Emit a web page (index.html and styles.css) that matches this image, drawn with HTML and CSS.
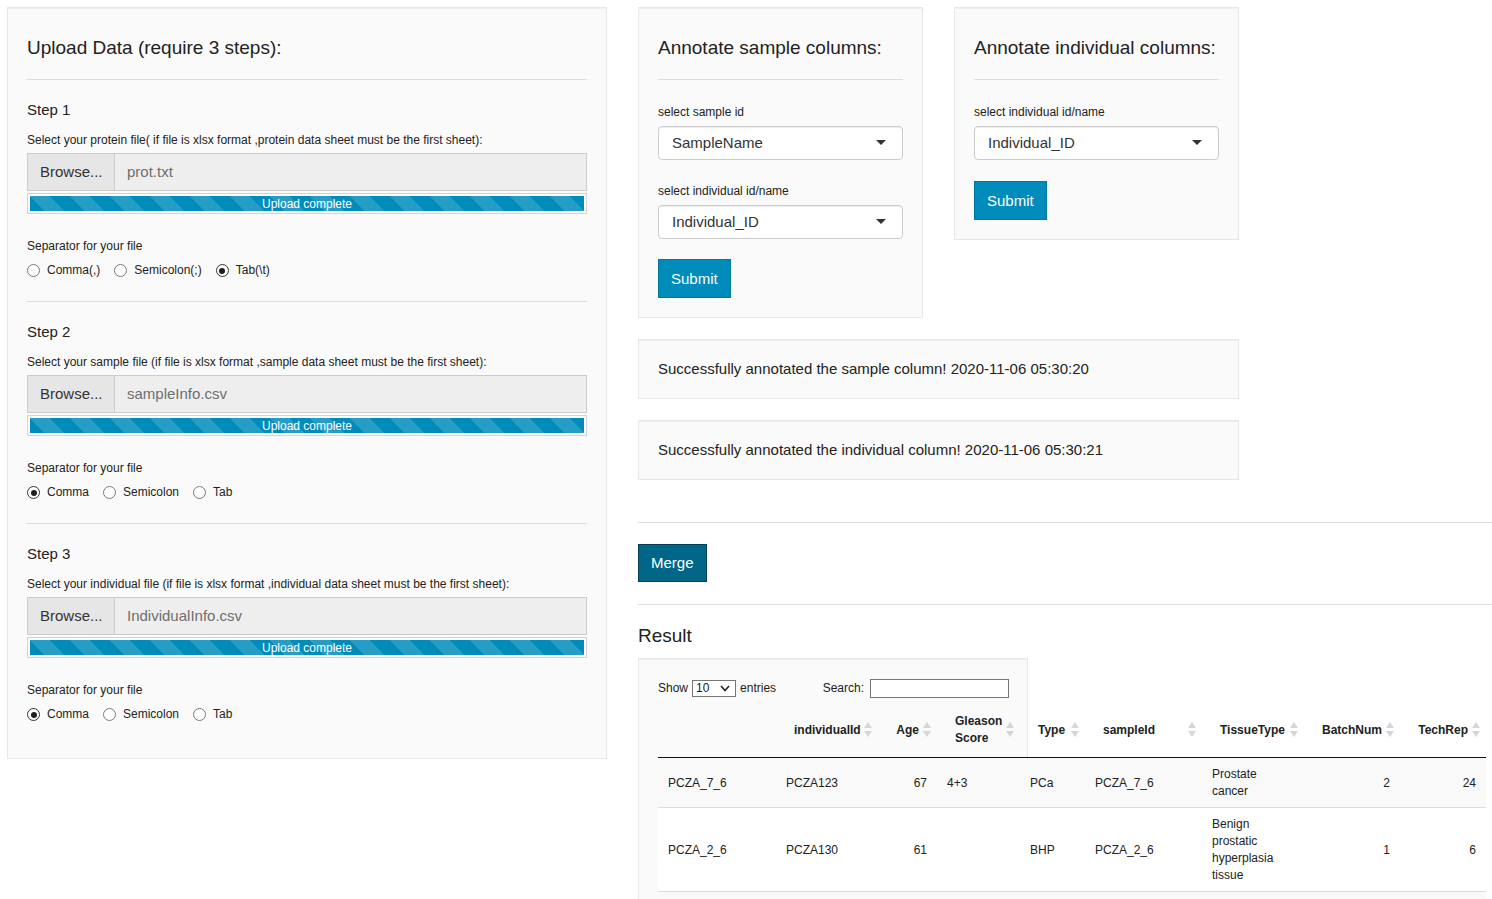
FILE: index.html
```html
<!DOCTYPE html>
<html lang="en">
<head>
<meta charset="utf-8">
<title>Upload Data</title>
<link rel="stylesheet" href="styles.css">
</head>
<body>
<div class="page">
  <aside class="sidebar well">
    <h3 class="well-title">Upload Data (require 3 steps):</h3>
    <hr class="rule">
    <section class="step">
      <h4 class="step-title">Step 1</h4>
      <div class="field-label">Select your protein file( if file is xlsx format ,protein data sheet must be the first sheet):</div>
      <div class="file-input"><span class="browse">Browse...</span><span class="file-name">prot.txt</span></div>
      <div class="progress"><div class="progress-bar">Upload complete</div></div>
      <div class="field-label sep-label">Separator for your file</div>
      <div class="radios">
        <span class="radio"><span class="radio-dot"></span>Comma(,)</span>
        <span class="radio"><span class="radio-dot"></span>Semicolon(;)</span>
        <span class="radio"><span class="radio-dot on"><span class="dot"></span></span>Tab(\t)</span>
      </div>
    </section>
    <hr class="rule">
    <section class="step">
      <h4 class="step-title">Step 2</h4>
      <div class="field-label">Select your sample file (if file is xlsx format ,sample data sheet must be the first sheet):</div>
      <div class="file-input"><span class="browse">Browse...</span><span class="file-name">sampleInfo.csv</span></div>
      <div class="progress"><div class="progress-bar">Upload complete</div></div>
      <div class="field-label sep-label">Separator for your file</div>
      <div class="radios">
        <span class="radio"><span class="radio-dot on"><span class="dot"></span></span>Comma</span>
        <span class="radio"><span class="radio-dot"></span>Semicolon</span>
        <span class="radio"><span class="radio-dot"></span>Tab</span>
      </div>
    </section>
    <hr class="rule">
    <section class="step last">
      <h4 class="step-title">Step 3</h4>
      <div class="field-label">Select your individual file (if file is xlsx format ,individual data sheet must be the first sheet):</div>
      <div class="file-input"><span class="browse">Browse...</span><span class="file-name">IndividualInfo.csv</span></div>
      <div class="progress"><div class="progress-bar">Upload complete</div></div>
      <div class="field-label sep-label">Separator for your file</div>
      <div class="radios">
        <span class="radio"><span class="radio-dot on"><span class="dot"></span></span>Comma</span>
        <span class="radio"><span class="radio-dot"></span>Semicolon</span>
        <span class="radio"><span class="radio-dot"></span>Tab</span>
      </div>
    </section>
  </aside>

  <main class="main">
    <div class="annot-row">
      <div class="well annot">
        <h3 class="well-title">Annotate sample columns:</h3>
        <hr class="rule">
        <div class="select-label">select sample id</div>
        <div class="selectize">SampleName</div>
        <div class="select-label second">select individual id/name</div>
        <div class="selectize">Individual_ID</div>
        <button class="btn submit">Submit</button>
      </div>
      <div class="well annot">
        <h3 class="well-title">Annotate individual columns:</h3>
        <hr class="rule">
        <div class="select-label">select individual id/name</div>
        <div class="selectize">Individual_ID</div>
        <button class="btn submit submit-2">Submit</button>
      </div>
    </div>

    <div class="well msg">Successfully annotated the sample column! 2020-11-06 05:30:20</div>
    <div class="well msg">Successfully annotated the individual column! 2020-11-06 05:30:21</div>

    <hr class="rule wide rule-top">
    <button class="btn merge">Merge</button>
    <hr class="rule wide rule-bottom">

    <h3 class="result-title">Result</h3>
    <div class="well table-well">
      <div class="dt-controls">
        <div class="length">Show <span class="len-select"><span>10</span><svg width="10" height="7" viewBox="0 0 10 7"><polyline points="1,1 5,5.5 9,1" fill="none" stroke="#222" stroke-width="1.6"/></svg></span> entries</div>
        <div class="filter">Search:<span class="search-box"></span></div>
      </div>
      <table class="dt">
        <colgroup>
          <col style="width:118px"><col style="width:102px"><col style="width:59px"><col style="width:83px"><col style="width:65px"><col style="width:117px"><col style="width:102px"><col style="width:96px"><col style="width:86px">
        </colgroup>
        <thead>
          <tr>
            <th></th>
            <th>individualId<span class="sort"></span></th>
            <th class="num">Age<span class="sort"></span></th>
            <th>Gleason Score<span class="sort"></span></th>
            <th>Type<span class="sort"></span></th>
            <th>sampleId<span class="sort"></span></th>
            <th>TissueType<span class="sort"></span></th>
            <th class="num">BatchNum<span class="sort"></span></th>
            <th class="num">TechRep<span class="sort"></span></th>
          </tr>
        </thead>
        <tbody>
          <tr class="odd">
            <td>PCZA_7_6</td><td>PCZA123</td><td class="num">67</td><td>4+3</td><td>PCa</td><td>PCZA_7_6</td><td>Prostate cancer</td><td class="num">2</td><td class="num">24</td>
          </tr>
          <tr class="even">
            <td>PCZA_2_6</td><td>PCZA130</td><td class="num">61</td><td></td><td>BHP</td><td>PCZA_2_6</td><td>Benign prostatic hyperplasia tissue</td><td class="num">1</td><td class="num">6</td>
          </tr>
          <tr class="odd">
            <td>&nbsp;</td><td></td><td></td><td></td><td></td><td></td><td></td><td></td><td></td>
          </tr>
        </tbody>
      </table>
    </div>
  </main>
</div>
</body>
</html>
```

FILE: styles.css
```css
* { box-sizing: border-box; }

html, body {
  margin: 0;
  overflow: hidden;
}

body {
  font-family: "Liberation Sans", Arial, Helvetica, sans-serif;
  font-size: 15px;
  line-height: 21px;
  color: #222;
  background: #fff;
}

.page {
  display: flex;
  align-items: flex-start;
  padding: 7px 0 0 7px;
  width: 1492px;
}

.well {
  background: #fafafa;
  border: 1px solid #e8e8e8;
  box-shadow: inset 0 1px 1px rgba(0, 0, 0, 0.05);
  padding: 19px;
}

.sidebar {
  width: 600px;
  flex: none;
}

.main {
  margin-left: 31px;
  width: 854px;
  flex: none;
}

.well-title {
  font-size: 19px;
  line-height: 21px;
  font-weight: normal;
  margin: 10px 0 21px;
  white-space: nowrap;
}

.rule {
  border: 0;
  border-top: 1px solid #dddddd;
  height: 0;
  margin: 0;
}

/* ---------- upload steps ---------- */
.step { padding: 19px 0 22px; }
.step.last { padding-bottom: 16px; }

.step-title {
  font-size: 15px;
  line-height: 21px;
  font-weight: normal;
  margin: 0;
}

.field-label {
  font-size: 12px;
  line-height: 17px;
  margin-top: 12px;
  white-space: nowrap;
}

.sep-label { margin-top: 24px; }

.file-input {
  display: flex;
  height: 38px;
  margin-top: 4px;
}

.browse {
  width: 88px;
  flex: none;
  border: 1px solid #cccccc;
  background: #e6e6e6;
  color: #333;
  padding-left: 12px;
  line-height: 36px;
}

.file-name {
  flex: 1;
  border: 1px solid #cccccc;
  border-left: 0;
  background: #eeeeee;
  color: #6f6f6f;
  padding-left: 12px;
  line-height: 36px;
}

.progress {
  margin-top: 2px;
  border: 1px solid #d3d3d3;
  background: #fdfdfd;
  padding: 2px;
}

.progress-bar {
  height: 15px;
  background-color: #008cba;
  background-image: linear-gradient(45deg,
    rgba(255, 255, 255, 0.15) 25%, transparent 25%, transparent 50%,
    rgba(255, 255, 255, 0.15) 50%, rgba(255, 255, 255, 0.15) 75%,
    transparent 75%, transparent);
  background-size: 40px 40px;
  color: #fff;
  font-size: 12px;
  line-height: 17px;
  text-align: center;
  overflow: hidden;
}

.radios {
  display: flex;
  gap: 14px;
  margin-top: 7px;
  font-size: 12px;
  line-height: 17px;
}

.radio {
  display: flex;
  align-items: center;
}

.radio-dot {
  width: 13px;
  height: 13px;
  border-radius: 50%;
  border: 1px solid #7a7a7a;
  background: #fff;
  margin-right: 7px;
  display: flex;
  align-items: center;
  justify-content: center;
}

.radio-dot.on { border-color: #333; }

.dot {
  width: 6px;
  height: 6px;
  border-radius: 50%;
  background: #1e1e1e;
}

/* ---------- annotate panels ---------- */
.annot-row {
  display: flex;
  gap: 31px;
  align-items: flex-start;
}

.annot { width: 285px; }

.select-label {
  font-size: 12px;
  line-height: 17px;
  margin-top: 24px;
}

.select-label.second { margin-top: 23px; }

.selectize {
  position: relative;
  height: 34px;
  margin-top: 5px;
  border: 1px solid #cccccc;
  border-radius: 4px;
  background: #fff;
  box-shadow: inset 0 1px 1px rgba(0, 0, 0, 0.075);
  padding-left: 13px;
  line-height: 32px;
  font-size: 15px;
  color: #333;
}

.selectize::after {
  content: "";
  position: absolute;
  right: 16px;
  top: 50%;
  margin-top: -3px;
  border-style: solid;
  border-width: 5px 5px 0 5px;
  border-color: #333 transparent transparent transparent;
}

.btn {
  display: block;
  font-family: inherit;
  font-size: 15px;
  line-height: 21px;
  padding: 8px 12px;
  border: 1px solid #0079a1;
  background: #008cba;
  color: #fff;
  border-radius: 0;
  cursor: pointer;
}

.submit { margin-top: 20px; }
.submit-2 { margin-top: 21px; }

/* ---------- messages ---------- */
.msg {
  width: 601px;
  margin-top: 21px;
  line-height: 20px;
}

.wide { width: 854px; }
.rule-top { margin-top: 42px; }
.rule-bottom { margin-top: 22px; }

.merge {
  margin-top: 21px;
  line-height: 20px;
  background: #006687;
  border-color: #003f55;
}

.result-title {
  font-size: 19px;
  line-height: 21px;
  font-weight: normal;
  margin: 20px 0 0;
}

/* ---------- data table ---------- */
.table-well {
  width: 390px;
  margin-top: 12px;
  padding-bottom: 0;
  height: 260px;
}

.dt-controls {
  display: flex;
  justify-content: space-between;
  align-items: center;
  width: 351px;
  height: 20px;
  font-size: 12px;
  line-height: 17px;
}

.length {
  display: flex;
  align-items: center;
  gap: 4px;
}

.len-select {
  width: 44px;
  height: 17px;
  border: 1px solid #767676;
  background: #fff;
  display: flex;
  align-items: center;
  justify-content: space-between;
  padding: 0 5px 0 3px;
  line-height: 15px;
}

.filter {
  display: flex;
  align-items: center;
}

.search-box {
  width: 139px;
  height: 19px;
  margin-left: 6px;
  border: 1px solid #767676;
  background: #fff;
}

.dt {
  width: 828px;
  table-layout: fixed;
  border-collapse: separate;
  border-spacing: 0;
  margin-top: 5px;
  font-size: 12px;
  line-height: 17px;
  color: #222;
}

.dt th {
  position: relative;
  font-weight: bold;
  padding: 10px 18px;
  border-bottom: 1px solid #111;
  text-align: left;
  vertical-align: middle;
}

.dt td {
  padding: 8px 10px 7px;
  vertical-align: middle;
}

.dt .num { text-align: right; }

.dt tr.odd { background: #f9f9f9; }
.dt tr.even { background: #fff; }

.dt tbody tr + tr td { border-top: 1px solid #dddddd; }

.sort {
  position: absolute;
  right: 6px;
  top: 50%;
  margin-top: -8px;
  width: 8px;
  height: 15px;
}

.sort::before,
.sort::after {
  content: "";
  position: absolute;
  left: 0;
  border-left: 4px solid transparent;
  border-right: 4px solid transparent;
}

.sort::before {
  top: 0;
  border-bottom: 6px solid #d6d6d6;
}

.sort::after {
  bottom: 0;
  border-top: 6px solid #d6d6d6;
}
```
